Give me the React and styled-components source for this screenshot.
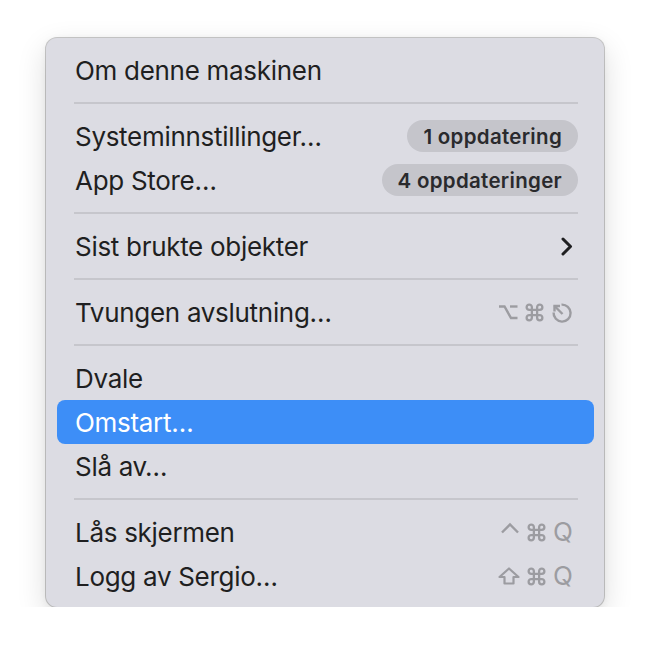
import React from 'react';
import styled, { createGlobalStyle } from 'styled-components';

const GlobalStyle = createGlobalStyle`
  html, body {
    margin: 0;
    background: #ffffff;
  }
  body {
    font-family: Inter, "Noto Sans", "DejaVu Sans", sans-serif;
    -webkit-font-smoothing: antialiased;
  }
`;

const Stage = styled.div`
  padding: 38px 0 0 46px;
`;

const Menu = styled.div`
  width: 558px;
  box-sizing: border-box;
  padding: 10px 10px 9px 11px;
  border-radius: 11px;
  background: #dcdce3;
  box-shadow:
    0 0 0 1px rgba(0, 0, 0, 0.2),
    0 10px 30px rgba(0, 0, 0, 0.14),
    0 2px 8px rgba(0, 0, 0, 0.06);
`;

const Item = styled.div`
  height: 44px;
  display: flex;
  align-items: center;
  justify-content: space-between;
  padding: 0 16px 0 18px;
  border-radius: 8px;
  font-size: 26px;
  letter-spacing: -0.3px;
  color: ${(p) => (p.$active ? '#ffffff' : '#1f1f21')};
  background: ${(p) => (p.$active ? '#3d8ef7' : 'transparent')};
`;

const Label = styled.span`
  white-space: nowrap;
`;

const Separator = styled.div`
  height: 22px;
  display: flex;
  align-items: center;
  padding: 0 16px 0 17px;

  &::after {
    content: '';
    flex: 1;
    height: 2px;
    background: #c6c6cc;
  }
`;

const Badge = styled.span`
  height: 32px;
  display: inline-flex;
  align-items: center;
  padding: 0 16px;
  border-radius: 16px;
  background: #c5c5cb;
  color: #2a2a2d;
  font-size: 20.5px;
  font-weight: 600;
  letter-spacing: 0.3px;
`;

const Keys = styled.span`
  display: inline-flex;
  align-items: center;
  gap: 6px;
  padding-right: 5px;
  color: #9c9ca1;
`;

const KeyText = styled.span`
  font-size: 26px;
  font-weight: 400;
  line-height: 1;
  letter-spacing: 0;
  color: #9c9ca1;
`;

const Glyph = styled.svg`
  display: block;
  fill: none;
  stroke: currentColor;
  stroke-width: ${(p) => p.$w || 2.4};
`;

const Chevron = () => (
  <Glyph width="12" height="19" viewBox="0 0 12 19" $w={3} style={{ marginRight: 5, stroke: '#1f1f21' }}>
    <path d="M2 2 L9.5 9.5 L2 17" strokeLinecap="round" strokeLinejoin="round" />
  </Glyph>
);

const OptionKey = () => (
  <Glyph width="20" height="18" viewBox="0 0 20 18">
    <path d="M1 3.5 H6.5 L13 15 H19.5" />
    <path d="M12 3.5 H19.5" />
  </Glyph>
);

const CommandKey = () => (
  <Glyph width="21" height="21" viewBox="0 0 24 24" $w={2.6}>
    <path d="M15 6v12a3 3 0 1 0 3-3H6a3 3 0 1 0 3 3V6a3 3 0 1 0-3 3h12a3 3 0 1 0-3-3" />
  </Glyph>
);

const EscapeKey = () => (
  <Glyph width="22" height="23" viewBox="0 0 22 23">
    <path d="M10.5 3.6 A8.5 8.5 0 1 1 2.6 11.5" />
    <path d="M11.5 13 L3.5 5" />
    <path d="M3.5 10.5 V5 H9" />
  </Glyph>
);

const ControlKey = () => (
  <Glyph width="20" height="12" viewBox="0 0 20 12" style={{ marginTop: -8 }}>
    <path d="M2 10.5 L10 2.5 L18 10.5" />
  </Glyph>
);

const ShiftKey = () => (
  <Glyph width="22" height="18" viewBox="0 0 22 18" $w={2.2}>
    <path d="M11 1.5 L20.5 10 H15.5 V16.5 H6.5 V10 H1.5 Z" strokeLinejoin="round" />
  </Glyph>
);

export default function App() {
  return (
    <Stage>
      <GlobalStyle />
      <Menu>
        <Item><Label>Om denne maskinen</Label></Item>
        <Separator />
        <Item>
          <Label>Systeminnstillinger…</Label>
          <Badge>1 oppdatering</Badge>
        </Item>
        <Item>
          <Label>App Store…</Label>
          <Badge>4 oppdateringer</Badge>
        </Item>
        <Separator />
        <Item>
          <Label>Sist brukte objekter</Label>
          <Chevron />
        </Item>
        <Separator />
        <Item>
          <Label>Tvungen avslutning…</Label>
          <Keys><OptionKey /><CommandKey /><EscapeKey /></Keys>
        </Item>
        <Separator />
        <Item><Label>Dvale</Label></Item>
        <Item $active><Label>Omstart…</Label></Item>
        <Item><Label>Slå av…</Label></Item>
        <Separator />
        <Item>
          <Label>Lås skjermen</Label>
          <Keys><ControlKey /><CommandKey /><KeyText>Q</KeyText></Keys>
        </Item>
        <Item>
          <Label>Logg av Sergio…</Label>
          <Keys><ShiftKey /><CommandKey /><KeyText>Q</KeyText></Keys>
        </Item>
      </Menu>
    </Stage>
  );
}
